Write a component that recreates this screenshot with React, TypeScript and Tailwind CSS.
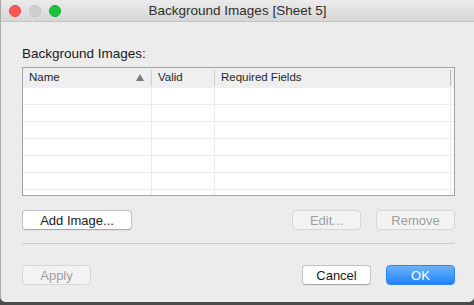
import React from 'react';

const FONT = { fontFamily: '"Liberation Sans", Arial, sans-serif' };

const columns = [
  { label: 'Name', width: 'w-[129px]', sorted: true },
  { label: 'Valid', width: 'w-[63px]', sorted: false },
  { label: 'Required Fields', width: 'flex-1', sorted: false },
];

const ROWS = 7;

const Button: React.FC<{ label: string; disabled?: boolean; primary?: boolean; className?: string }> = ({
  label,
  disabled,
  primary,
  className = '',
}) => {
  if (primary) {
    return (
      <button
        className={`h-[20px] rounded-[4px] border border-[#2f86f5] bg-gradient-to-b from-[#6bb2fb] to-[#1a82fb] text-[13px] leading-none text-white ${className}`}
      >
        {label}
      </button>
    );
  }
  return (
    <button
      disabled={disabled}
      className={`h-[20px] rounded-[4px] border text-[13px] leading-none ${
        disabled
          ? 'border-[#d6d6d6] bg-[#f3f3f3] text-[#9e9e9e]'
          : 'border-[#c2c2c2] border-b-[#aaaaaa] bg-white text-[#1a1a1a] shadow-[0_0.5px_0_rgba(0,0,0,0.1)]'
      } ${className}`}
    >
      {label}
    </button>
  );
};

const App: React.FC = () => {
  return (
    <div className="w-[474px] h-[305px] bg-[#4b4b4b] overflow-hidden" style={FONT}>
      <div className="h-[302px] flex flex-col bg-[#ececec] border-l border-[#a9a9a9] rounded-b-[5px] overflow-hidden">
        {/* Title bar */}
        <div className="h-[22px] shrink-0 grid grid-cols-[1fr_auto_1fr] items-center border-b border-[#c5c5c5] bg-gradient-to-b from-[#ebebeb] to-[#d6d6d6]">
          <div className="flex items-center gap-[8px] pl-[8px]">
            <span className="w-[12px] h-[12px] rounded-full bg-[#fc5753] border border-[#df4744]" />
            <span className="w-[12px] h-[12px] rounded-full bg-[#d0d0d0] border border-[#c4c4c4]" />
            <span className="w-[12px] h-[12px] rounded-full bg-[#1ac337] border border-[#16a82f]" />
          </div>
          <div className="text-[13.5px] text-[#2e2e2e] leading-none">Background Images [Sheet 5]</div>
          <div />
        </div>

        {/* Content */}
        <div className="flex-1 flex flex-col pl-[21px] pr-[19px]">
          <div className="mt-[24px] text-[13.5px] leading-[16px] text-[#1a1a1a]">Background Images:</div>

          {/* Table */}
          <div className="mt-[5px] h-[129px] border border-[#a3a3a3] bg-white flex flex-col overflow-hidden">
            <div className="h-[20px] shrink-0 flex bg-[#efefef]">
              {columns.map((c, i) => (
                <div key={c.label} className={`${c.width} relative flex items-center pl-[6px] text-[11.5px] text-[#262626]`}>
                  <span>{c.label}</span>
                  {c.sorted && (
                    <svg className="absolute right-[8px] top-[6px]" width="8" height="7" viewBox="0 0 8 7">
                      <path d="M4 0 L8 7 L0 7 Z" fill="#7a7a7a" />
                    </svg>
                  )}
                  <span
                    className={`absolute right-0 top-[2px] bottom-[2px] w-px ${i === columns.length - 1 ? 'mr-[3px] bg-[#b8b8b8]' : 'bg-[#cfcfcf]'}`}
                  />
                </div>
              ))}
            </div>
            <div className="flex-1 overflow-hidden">
              {Array.from({ length: ROWS }).map((_, r) => (
                <div key={r} className="h-[17px] flex border-b border-[#ebebeb]">
                  <div className="w-[129px] border-r border-[#ebebeb]" />
                  <div className="w-[63px] border-r border-[#ebebeb]" />
                  <div className="flex-1 mr-[3px] border-r border-[#ebebeb]" />
                </div>
              ))}
            </div>
          </div>

          {/* Table actions */}
          <div className="mt-[14px] flex items-center">
            <Button label="Add Image..." className="w-[110px]" />
            <div className="flex-1" />
            <Button label="Edit..." disabled className="w-[69px]" />
            <Button label="Remove" disabled className="w-[79px] ml-[15px]" />
          </div>

          <div className="mt-[13px] h-px bg-[#cdcdcd]" />

          {/* Dialog buttons */}
          <div className="mt-[21px] flex items-center">
            <Button label="Apply" disabled className="w-[69px]" />
            <div className="flex-1" />
            <Button label="Cancel" className="w-[69px]" />
            <Button label="OK" primary className="w-[69px] ml-[15px]" />
          </div>
        </div>
      </div>
    </div>
  );
};

export default App;
